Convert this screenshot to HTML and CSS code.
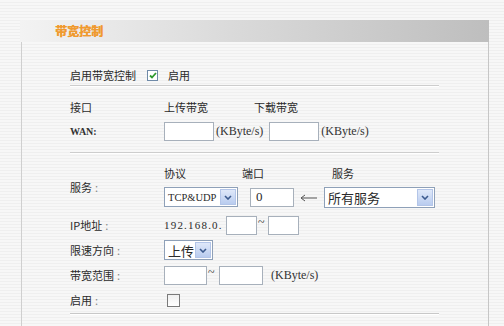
FILE: index.html
```html
<!DOCTYPE html>
<html lang="zh-CN">
<head>
  <meta charset="UTF-8" />
  <title>带宽控制</title>
  <link rel="stylesheet" href="styles.css">
</head>
<body>
  <div class="panel">
    <div class="title">带宽控制</div>
    <div class="body">
      <div class="section top">
        <div class="row">
          <span class="enable-label">启用带宽控制</span>
          <span class="check on"><svg width="8" height="7" viewBox="0 0 8 7"><path d="M1 3.5 L3 5.5 L7 1" fill="none" stroke="#2f9a2f" stroke-width="1.8"/></svg></span>
          <span>启用</span>
        </div>
      </div>

      <div class="section wan">
        <div class="row head">
          <span class="label">接口</span>
          <span class="col-up">上传带宽</span>
          <span>下载带宽</span>
        </div>
        <div class="row">
          <span class="label latin">WAN:</span>
          <span class="input w50"></span>
          <span class="unit">(KByte/s)</span>
          <span class="input w50 gap"></span>
          <span class="unit">(KByte/s)</span>
        </div>
      </div>

      <div class="section rules">
        <div class="service">
          <span class="label svc-label">服务<i>:</i></span>
          <div class="svc">
            <div class="row head">
              <span class="h-proto">协议</span>
              <span class="h-port">端口</span>
              <span>服务</span>
            </div>
            <div class="row">
              <div class="select w74"><span class="latin opt">TCP&amp;UDP</span><span class="drop"><svg width="8" height="5" viewBox="0 0 8 5"><path d="M1 1 L4 4 L7 1" fill="none" stroke="#3b5a8e" stroke-width="1.6"/></svg></span></div>
              <span class="input w44 port"><span class="latin big">0</span></span>
              <svg class="arrow" width="18" height="8" viewBox="0 0 18 8"><path d="M5 1 L1 4 L5 7 M1 4 H17" fill="none" stroke="#555" stroke-width="1"/></svg>
              <div class="select w111"><span class="big">所有服务</span><span class="drop"><svg width="8" height="5" viewBox="0 0 8 5"><path d="M1 1 L4 4 L7 1" fill="none" stroke="#3b5a8e" stroke-width="1.6"/></svg></span></div>
            </div>
          </div>
        </div>

        <div class="row ip">
          <span class="label">IP地址<i>:</i></span>
          <span class="latin ipnum">192.168.0.</span>
          <span class="input w31"></span>
          <span class="tilde">~</span>
          <span class="input w31"></span>
        </div>
        <div class="row">
          <span class="label">限速方向<i>:</i></span>
          <div class="select w49"><span class="big">上传</span><span class="drop"><svg width="8" height="5" viewBox="0 0 8 5"><path d="M1 1 L4 4 L7 1" fill="none" stroke="#3b5a8e" stroke-width="1.6"/></svg></span></div>
        </div>
        <div class="row">
          <span class="label">带宽范围<i>:</i></span>
          <span class="input w43"></span>
          <span class="tilde">~</span>
          <span class="input w44"></span>
          <span class="unit far">(KByte/s)</span>
        </div>
        <div class="row">
          <span class="label">启用<i>:</i></span>
          <span class="check off"></span>
        </div>
      </div>
    </div>
  </div>
</body>
</html>
```

FILE: styles.css
```css
* { box-sizing: border-box; }
html, body { margin: 0; padding: 0; height: 100%; }
body {
  background: repeating-linear-gradient(#f7f7f7 0 2px, #efefef 2px 3px);
  color: #2a2a2a;
  font-family: "Noto Sans CJK SC", sans-serif;
  font-size: 11px;
  overflow: hidden;
}
.panel { margin: 20px 0 0 20px; width: 469px; }
.title {
  height: 22px; line-height: 22px; padding-left: 35px;
  background: linear-gradient(to right, #f3f3f3, #dadada 45%, #bebebe);
  color: #f09a2e; font-weight: bold; font-size: 12px;
  text-shadow: 0.6px 0 0 #f09a2e;
}
.body {
  margin-left: 1px; height: 284px;
  border-left: 1px solid #cfcfcf; border-right: 1px solid #c6c6c6;
  padding-left: 48px;
}
.section { width: 369px; border-bottom: 1px solid #cdcdcd; box-shadow: 0 1px 0 #fff; }
.section.top { padding-top: 23px; }
.section.wan { padding: 12px 0 11px; }
.section.rules { padding: 11px 0 3px; border-color: #c8c8c8; }
.row { display: flex; align-items: center; height: 20px; }
.row.head { height: 18px; margin-bottom: 5px; }
.rules > .row { margin-top: 5px; }
.rules > .row.ip { margin-top: 8px; }
.label { width: 94px; flex: none; }
.label i { font-style: normal; color: #888; margin-left: 3px; }
.latin { font-family: "Liberation Serif", "Noto Sans CJK SC", serif; }
.label.latin { font-size: 10px; font-weight: bold; color: #333; }
.big { font-size: 13px; }
.opt { font-size: 10.5px; }
.enable-label { margin-right: 11px; }
.check {
  width: 11px; height: 11px; border: 1px solid #6f8aa8; background: #fff;
  display: flex; align-items: center; justify-content: center; margin-right: 10px;
}
.check.off { width: 13px; height: 13px; margin-left: 3px; border-color: #7a7a7a; background: linear-gradient(#f0f0f0, #fff); }
.col-up { width: 90px; }
.input {
  height: 19px; border: 1px solid #a7b0bb; background: #fff; flex: none;
  display: flex; align-items: center; padding-left: 5px;
}
.w50 { width: 50px; }
.w44 { width: 44px; }
.w43 { width: 43px; }
.w31 { width: 31px; }
.input.gap { margin-left: 6px; }
.unit { font-family: "Liberation Serif", serif; font-size: 12px; margin-left: 2px; color: #333; }
.unit.far { margin-left: 8px; }
.service { display: flex; }
.svc-label { align-self: center; padding-top: 3px; }
.h-proto { width: 78px; }
.h-port { width: 90px; }
.select {
  position: relative; height: 20px; border: 1px solid #8ea0b8; background: #fff;
  display: flex; align-items: center; padding-left: 3px; flex: none;
}
.w74 { width: 74px; }
.w111 { width: 111px; height: 21px; }
.w49 { width: 49px; }
.drop {
  position: absolute; right: 1px; top: 1px; bottom: 1px; width: 16px;
  background: linear-gradient(#dfe8f9, #b9ccef); border: 1px solid #b3c5e8;
  display: flex; align-items: center; justify-content: center;
}
.port { margin-left: 12px; }
.arrow { margin: 2px 6px 0 6px; }
.ipnum { font-size: 11px; letter-spacing: 1.2px; width: 62px; }
.tilde { font-family: "Liberation Serif", serif; font-size: 12px; align-self: flex-start; width: 11px; padding-left: 1px; }
.w43 + .tilde { width: 12px; }
```
